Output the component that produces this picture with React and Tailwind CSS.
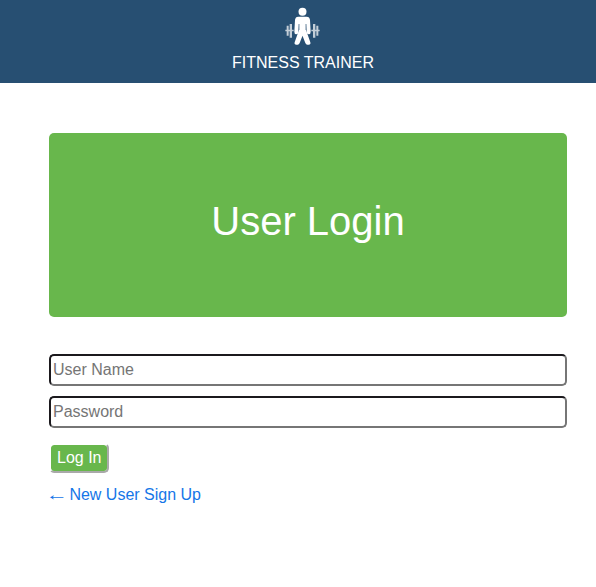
function TrainerIcon() {
  return (
    <svg width="36" height="38" viewBox="45 21 108 114" fill="#fff" aria-hidden="true">
      <circle cx="97.5" cy="35" r="12" />
      <path d="M85 50h25q9 0 10 10l2 35q0 8-6 8t-6-7l-1-24h-2v24H88V72h-2l-1 24q0 7-6 7t-6-8l2-35q1-10 10-10z" />
      <path d="M87 90h21l13 37q2 7-5 7h-4q-4 0-6-5l-8.5-22-8.5 22q-2 5-6 5h-4q-7 0-5-7z" />
      <g opacity="0.72">
        <path d="M46 89h25v5H46zM124 89h25v5h-25z" />
        <path d="M50 77h6v30h-6zM59 72h7v41h-7zM129 72h7v41h-7zM139 77h6v30h-6z" />
      </g>
    </svg>
  );
}

const inputClass =
  "block h-8 w-full rounded-[5px] border-2 border-t-[#1b191d] border-l-[#1b191d] border-r-[#767676] border-b-[#767676] bg-white px-0.5 text-base leading-6 text-black outline-none placeholder:text-[#757575]";

export default function App() {
  return (
    <div className="min-h-screen bg-white font-['Liberation_Sans',Arial,sans-serif] text-base leading-6">
      <header className="flex h-[83px] flex-col items-center bg-[#274f72] pt-[7px] pl-[10px] text-white">
        <TrainerIcon />
        <div className="mt-[6px]">FITNESS TRAINER</div>
      </header>
      <main className="pt-[50px] pr-[29px] pl-[49px]">
        <section className="flex h-[184px] items-center justify-center rounded-[5px] bg-[#68b74c] pb-2 text-white">
          <h1 className="text-[40px] leading-[48px]">User Login</h1>
        </section>
        <form className="mt-[37px] flex flex-col items-start">
          <input className={inputClass} placeholder="User Name" />
          <input className={`${inputClass} mt-2.5`} type="password" placeholder="Password" />
          <button
            type="button"
            className="mt-[15px] h-[30px] rounded-[5px] border-2 border-t-white border-r-[#a9a9a9] border-b-[#a9a9a9] border-l-white bg-[#68b74c] bg-clip-padding px-1.5 text-white"
          >
            Log In
          </button>
        </form>
        <a href="#signup" className="mt-[10px] flex text-[#1576e8]">
          <span className="mr-[4.4px] inline-block scale-x-[1.4]">←</span>
          <span>New User Sign Up</span>
        </a>
      </main>
    </div>
  );
}
